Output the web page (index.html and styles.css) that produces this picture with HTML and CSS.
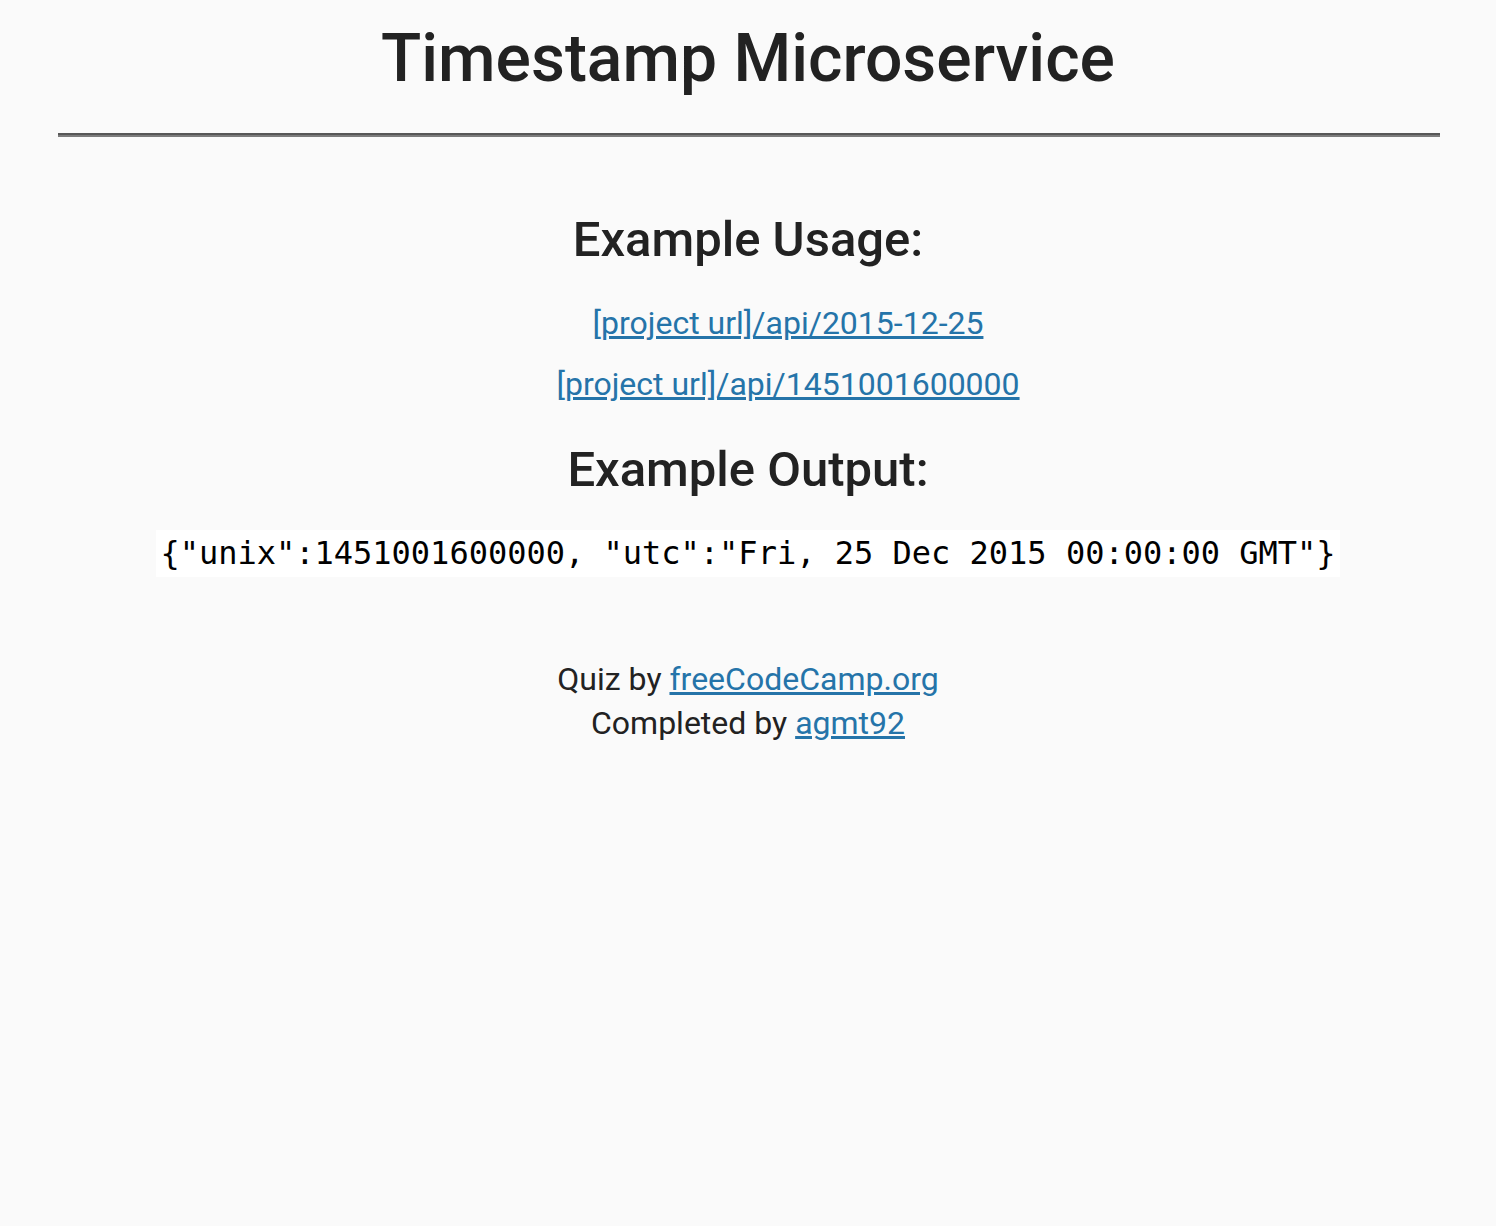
FILE: index.html
```html
<!DOCTYPE html>
<html lang="en">
<head>
<meta charset="utf-8">
<title>Timestamp Microservice</title>
<link rel="stylesheet" href="styles.css">
</head>
<body>
  <h1 class="title">Timestamp Microservice</h1>
  <hr class="rule">
  <h3 class="section-title usage-title">Example Usage:</h3>
  <ul class="examples">
    <li><a href="#">[project url]/api/2015-12-25</a></li>
    <li><a href="#">[project url]/api/1451001600000</a></li>
  </ul>
  <h3 class="section-title output-title">Example Output:</h3>
  <p class="output"><code class="output-code">{"unix":1451001600000, "utc":"Fri, 25 Dec 2015 00:00:00 GMT"}</code></p>
  <div class="footer">
    <p class="footer-line">Quiz by <a href="#">freeCodeCamp.org</a></p>
    <p class="footer-line">Completed by <a href="#">agmt92</a></p>
  </div>
</body>
</html>
```

FILE: styles.css
```css
html, body {
  margin: 0;
  padding: 0;
}

body {
  display: flex;
  flex-direction: column;
  min-height: 1226px;
  box-sizing: border-box;
  font-family: Roboto, "Noto Sans", sans-serif;
  font-size: 32px;
  line-height: 44.8px;
  color: #222;
  background-color: #fafafa;
  text-align: center;
}

a {
  color: #2574a9;
}

.title {
  margin: 20px 0 0;
  font-size: 66px;
  line-height: 78px;
  font-weight: 500;
}

.rule {
  margin: 35px 56px 0 58px;
  height: 0;
  border: 0;
  border-top: 2px solid #575757;
  border-bottom: 2px solid #7c7c7c;
}

.section-title {
  margin: 0;
  font-size: 49px;
  line-height: 54px;
  font-weight: 500;
}

.usage-title {
  margin-top: 76px;
}

.examples {
  list-style: none;
  margin: 34px 0 0;
  padding: 0 0 0 80px;
  display: flex;
  flex-direction: column;
  gap: 16px;
}

.output-title {
  margin-top: 36px;
}

.output {
  margin: 33px 0 0;
  line-height: 47px;
}

.output-code {
  display: inline-block;
  vertical-align: top;
  font-family: "DejaVu Sans Mono", monospace;
  font-size: 32px;
  line-height: 37px;
  padding: 5px 4px;
  color: #000;
  background-color: #fff;
}

.footer {
  margin-top: 80px;
}

.footer-line {
  margin: 0;
}
```
